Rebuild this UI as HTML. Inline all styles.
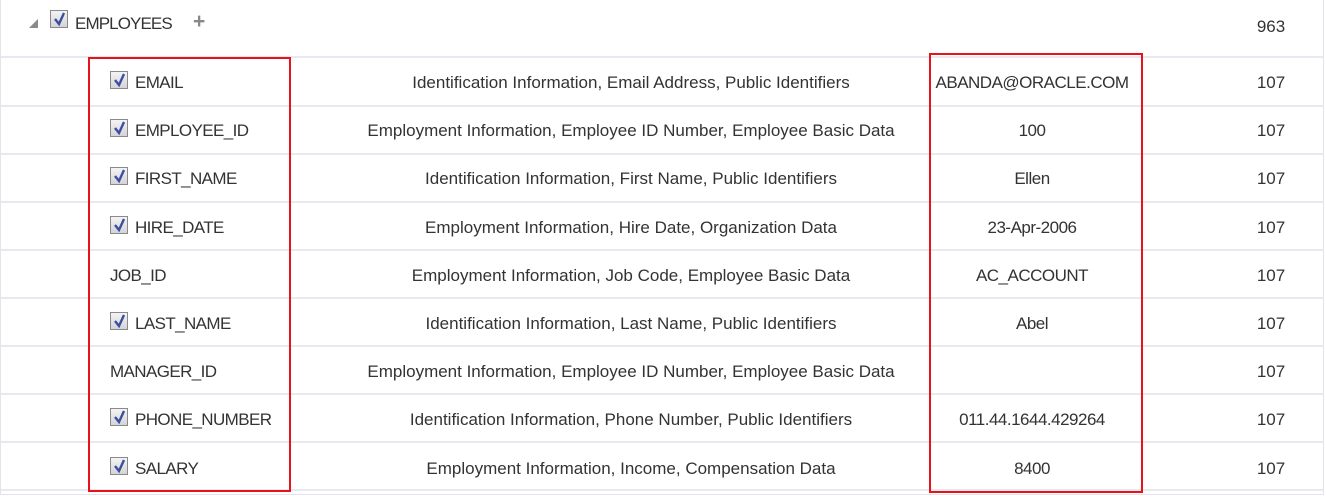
<!DOCTYPE html>
<html><head><style>
body{margin:0;width:1326px;height:498px;background:#fff;font-family:"Liberation Sans",sans-serif;font-size:17px;color:#333;position:relative;overflow:hidden}
.frame{position:absolute;left:0;top:0;width:1322px;height:494px;border:1px solid #e3e3ee;border-top:none}
.line{position:absolute;left:1px;width:1322px;height:2px;background:#e8e8f0}
.t{position:absolute;white-space:nowrap;line-height:20px}
.c{transform:translateX(-50%)}
.k{letter-spacing:-0.6px}
.cb{position:absolute;width:18px;height:18px;border:1px solid #8a8a8a;background:linear-gradient(#f4f4f4,#d4d4d8);box-sizing:border-box}
.cb svg{position:absolute;left:1px;top:0}
.red{position:absolute;border:2px solid #e8121a;box-sizing:border-box}
</style></head><body>
<div class="frame"></div>
<div class="line" style="top:56px"></div>
<div class="line" style="top:105px"></div>
<div class="line" style="top:153px"></div>
<div class="line" style="top:201px"></div>
<div class="line" style="top:249px"></div>
<div class="line" style="top:297px"></div>
<div class="line" style="top:345px"></div>
<div class="line" style="top:393px"></div>
<div class="line" style="top:441px"></div>
<div class="line" style="top:489px"></div>

<svg style="position:absolute;left:28px;top:18px" width="11" height="11"><path d="M10 1 L10 10 L1 10 Z" fill="#8a8a8a"/></svg>
<div class="cb" style="left:50px;top:10px"><svg width="15" height="16"><path d="M3 8 L7 13 L12 2" stroke="#3a4fa0" stroke-width="2.4" fill="none"/></svg></div>
<div class="t k" style="left:75px;top:14px;letter-spacing:-0.9px">EMPLOYEES</div>
<div class="t" style="left:193px;top:12px;font-size:21px;color:#888;font-weight:bold">+</div>
<div class="t c" style="left:1271px;top:17px">963</div>

<div id="rows"></div>
<script>
var rows=[
["EMAIL",1,"Identification Information, Email Address, Public Identifiers","ABANDA@ORACLE.COM"],
["EMPLOYEE_ID",1,"Employment Information, Employee ID Number, Employee Basic Data","100"],
["FIRST_NAME",1,"Identification Information, First Name, Public Identifiers","Ellen"],
["HIRE_DATE",1,"Employment Information, Hire Date, Organization Data","23-Apr-2006"],
["JOB_ID",0,"Employment Information, Job Code, Employee Basic Data","AC_ACCOUNT"],
["LAST_NAME",1,"Identification Information, Last Name, Public Identifiers","Abel"],
["MANAGER_ID",0,"Employment Information, Employee ID Number, Employee Basic Data",""],
["PHONE_NUMBER",1,"Identification Information, Phone Number, Public Identifiers","011.44.1644.429264"],
["SALARY",1,"Employment Information, Income, Compensation Data","8400"]];
var h="";
rows.forEach(function(r,i){var y=73+i*48.2;
if(r[1]){h+='<div class="cb" style="left:110px;top:'+(y-2)+'px"><svg width="15" height="16"><path d="M3 8 L7 13 L12 2" stroke="#3a4fa0" stroke-width="2.4" fill="none"/></svg></div><div class="t k" style="left:135px;top:'+y+'px">'+r[0]+'</div>';}
else h+='<div class="t k" style="left:110px;top:'+y+'px">'+r[0]+'</div>';
h+='<div class="t c" style="left:631px;top:'+y+'px">'+r[2]+'</div>';
h+='<div class="t c" style="left:1032px;top:'+y+'px;letter-spacing:-0.5px">'+r[3]+'</div>';
h+='<div class="t c" style="left:1271px;top:'+y+'px">107</div>';});
document.getElementById("rows").innerHTML=h;
</script>
<div class="red" style="left:88px;top:57px;width:203px;height:435px"></div>
<div class="red" style="left:929px;top:53px;width:214px;height:440px"></div>
</body></html>
